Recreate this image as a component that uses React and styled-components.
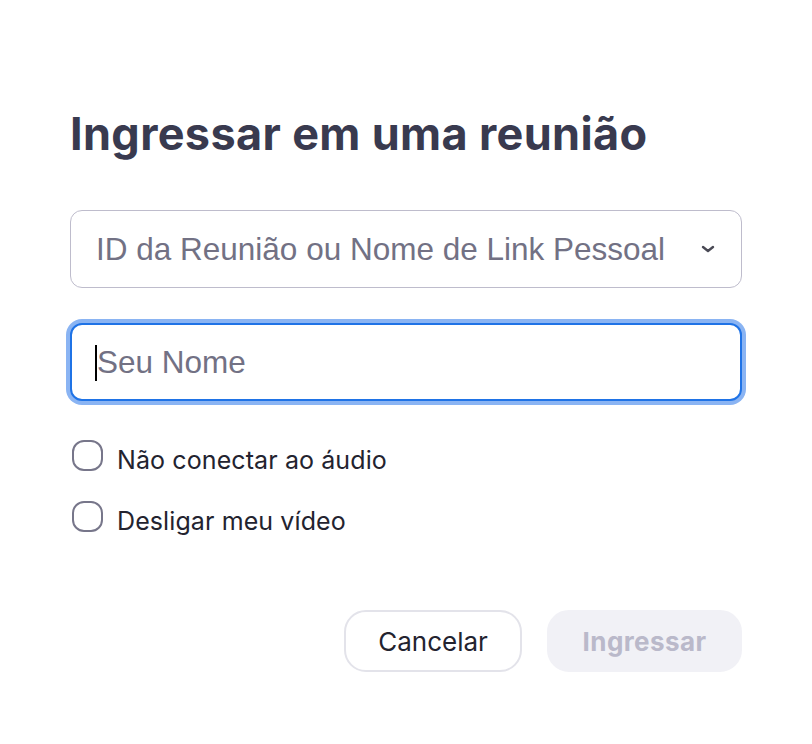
import styled, { createGlobalStyle } from 'styled-components'

const GlobalStyle = createGlobalStyle`
    html, body {
        margin: 0;
        padding: 0;
        background: #ffffff;
    }
    * {
        box-sizing: border-box;
    }
`;

const Page = styled.div`
    width: 812px;
    height: 744px;
    padding: 111px 70px 0 70px;
    display: flex;
    flex-direction: column;
    font-family: Inter, "Noto Sans", sans-serif;
`;

const Title = styled.h1`
    margin: 0;
    font-size: 45px;
    line-height: 45px;
    font-weight: 700;
    color: #393a4f;
    letter-spacing: 0.35px;
`;

const Field = styled.div`
    position: relative;
    width: 672px;
    height: 78px;
    margin-top: ${p => p.$gap}px;
    display: flex;
    align-items: center;
    border-radius: 12px;
    background: #fff;
    border: ${p => p.$focused ? '2px solid #1f73e6' : '1.5px solid #bebccc'};
    box-shadow: ${p => p.$focused ? '0 0 0 4px #8ab4f3' : 'none'};
    padding: 0 24px 0 25px;
`;

const TextInput = styled.input`
    flex: 1;
    min-width: 0;
    border: none;
    outline: none;
    background: transparent;
    padding: 0;
    font-family: "Liberation Sans", Arial, sans-serif;
    font-size: 31.5px;
    color: #23232f;
    caret-color: transparent;

    &::placeholder {
        color: #727184;
        opacity: 1;
    }
`;

const Caret = styled.span`
    position: absolute;
    left: 23px;
    top: 20px;
    width: 2px;
    height: 36px;
    background: #000;
`;

const Chevron = styled.svg`
    width: 18px;
    height: 10px;
    margin-left: 8px;
    flex-shrink: 0;
`;

const Options = styled.div`
    display: flex;
    flex-direction: column;
    gap: 30px;
    margin-top: 39px;
`;

const CheckRow = styled.label`
    display: flex;
    align-items: center;
    height: 31px;
    gap: 14px;
    padding-left: 2px;
    font-size: 25px;
    letter-spacing: 0.1px;
    color: #23232f;
    cursor: pointer;
`;

const LabelText = styled.span`
    margin: 4px 0 -4px;
`;

const Box = styled.span`
    width: 31px;
    height: 31px;
    border-radius: 12px;
    border: 2px solid #77768a;
    background: #fff;
    flex-shrink: 0;
`;

const Actions = styled.div`
    display: flex;
    justify-content: flex-end;
    gap: 25px;
    margin-top: 78px;
`;

const Button = styled.button`
    width: ${p => p.$w}px;
    height: 62px;
    padding: 0;
    border-radius: 22px;
    font-family: Inter, "Noto Sans", sans-serif;
    font-size: 26px;
    font-weight: ${p => p.$primary ? 700 : 400};
    letter-spacing: ${p => p.$primary ? '0.4px' : '0'};
    color: ${p => p.$primary ? '#bab9ca' : '#23232f'};
    background: ${p => p.$primary ? '#f1f1f6' : '#ffffff'};
    border: 2px solid ${p => p.$primary ? '#f1f1f6' : '#e3e3ea'};
    cursor: ${p => p.$primary ? 'default' : 'pointer'};
`;

export default function App() {
    return (
        <>
            <GlobalStyle />
            <Page>
                <Title>Ingressar em uma reunião</Title>
                <Field $gap={54}>
                    <TextInput placeholder="ID da Reunião ou Nome de Link Pessoal" />
                    <Chevron viewBox="0 0 18 10">
                        <path d="M4 3 L9 7 L14 3" fill="none" stroke="#4a4a55" strokeWidth="2.4" strokeLinecap="round" strokeLinejoin="round" />
                    </Chevron>
                </Field>
                <Field $gap={35} $focused>
                    <Caret />
                    <TextInput placeholder="Seu Nome" />
                </Field>
                <Options>
                    <CheckRow>
                        <Box />
                        <LabelText>Não conectar ao áudio</LabelText>
                    </CheckRow>
                    <CheckRow>
                        <Box />
                        <LabelText>Desligar meu vídeo</LabelText>
                    </CheckRow>
                </Options>
                <Actions>
                    <Button $w={178}>Cancelar</Button>
                    <Button $w={195} $primary disabled>Ingressar</Button>
                </Actions>
            </Page>
        </>
    )
}
